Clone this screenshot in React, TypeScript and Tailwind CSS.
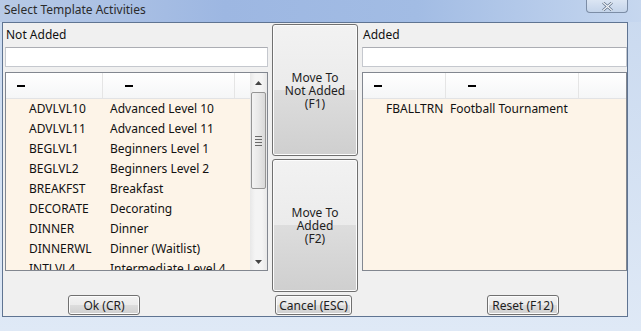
const notAdded = [
  ["ADVLVL10", "Advanced Level 10"],
  ["ADVLVL11", "Advanced Level 11"],
  ["BEGLVL1", "Beginners Level 1"],
  ["BEGLVL2", "Beginners Level 2"],
  ["BREAKFST", "Breakfast"],
  ["DECORATE", "Decorating"],
  ["DINNER", "Dinner"],
  ["DINNERWL", "Dinner (Waitlist)"],
  ["INTLVL4", "Intermediate Level 4"],
];

const added = [["FBALLTRN", "Football Tournament"]];

const btn =
  "border border-[#707070] rounded-[3px] bg-[linear-gradient(#f2f2f2_0%,#ebebeb_50%,#dddddd_50%,#cfcfcf_100%)] shadow-[inset_0_0_0_1px_#fcfcfc] text-[12px] text-[#1e1e1e] flex items-center justify-center text-center leading-[13px]";

const Dash = () => <div className="w-[8px] h-[2px] bg-black" />;

const ListView = ({
  rows,
  codeW,
  descW,
  descPad,
  scroll,
}: {
  rows: string[][];
  codeW: number;
  descW: number;
  descPad: number;
  scroll?: boolean;
}) => (
  <div className="h-[199px] border border-[#828790] bg-[#fdf4e8] flex overflow-hidden">
    <div className="flex-1 flex flex-col min-w-0">
      <div className="h-[26px] shrink-0 flex bg-[linear-gradient(#ffffff,#f5f6f7)] border-b border-[#e2e3e5]">
        <div
          className="h-full flex items-center pl-[11px] border-r border-[#e5e5e5]"
          style={{ width: codeW }}
        >
          <Dash />
        </div>
        <div
          className="h-full flex items-center pl-[22px] border-r border-[#e5e5e5]"
          style={{ width: descW }}
        >
          <Dash />
        </div>
        <div className="flex-1" />
      </div>
      {rows.map(([code, desc]) => (
        <div key={code} className="h-[20px] shrink-0 flex items-center text-[12px] text-[#111]">
          <div className="pl-[23px] whitespace-nowrap" style={{ width: codeW }}>
            {code}
          </div>
          <div className="whitespace-nowrap" style={{ paddingLeft: descPad }}>
            {desc}
          </div>
        </div>
      ))}
    </div>
    {scroll && (
      <div className="w-[17px] shrink-0 bg-[linear-gradient(90deg,#e8e8e8,#f4f4f4_30%,#f4f4f4_70%,#e8e8e8)] flex flex-col items-center">
        <div className="h-[19px] w-full flex items-center justify-center">
          <svg width="7" height="4" viewBox="0 0 7 4">
            <path d="M0 4 L3.5 0 L7 4 Z" fill="#444" />
          </svg>
        </div>
        <div className="w-[15px] h-[97px] rounded-[2px] border border-[#959595] bg-[linear-gradient(90deg,#f3f3f3,#e8e8e8_50%,#d9d9d9)] flex flex-col items-center justify-center gap-[2px]">
          <div className="w-[7px] h-[1px] bg-[#6a6a6a]" />
          <div className="w-[7px] h-[1px] bg-[#6a6a6a]" />
          <div className="w-[7px] h-[1px] bg-[#6a6a6a]" />
          <div className="w-[7px] h-[1px] bg-[#6a6a6a]" />
        </div>
        <div className="flex-1" />
        <div className="h-[17px] w-full flex items-center justify-center">
          <svg width="7" height="4" viewBox="0 0 7 4">
            <path d="M0 0 L7 0 L3.5 4 Z" fill="#444" />
          </svg>
        </div>
      </div>
    )}
  </div>
);

export default function App() {
  return (
    <div className="w-[641px] h-[331px] overflow-hidden bg-[linear-gradient(180deg,#c9d9ef,#dfe9f6)] font-['Noto_Sans','Open_Sans',sans-serif] text-[12px] flex flex-col">
      {/* title bar */}
      <div className="h-[22px] shrink-0 flex items-start bg-[linear-gradient(90deg,#b8cae6,#9db7e2_35%,#a2bce4_65%,#c6d7ef)]">
        <div className="pl-[4px] pt-[1px] text-[12px] text-[#2b2b2b] leading-[17px]">
          Select Template Activities
        </div>
        <div className="flex-1" />
        <div className="mr-[13px] w-[42px] h-[13px] border border-t-0 border-[#7c8da6] rounded-b-[4px] bg-[linear-gradient(#dbe5f3,#c4d4ea)] flex items-center justify-center">
          <svg width="11" height="9" viewBox="0 0 11 9">
            <path d="M1 0.5 L10 8.5 M10 0.5 L1 8.5" stroke="#5a6b82" strokeWidth="2.6" />
            <path d="M1 0.5 L10 8.5 M10 0.5 L1 8.5" stroke="#f4f7fb" strokeWidth="1.2" />
          </svg>
        </div>
      </div>

      {/* client area */}
      <div className="ml-[2px] w-[626px] h-[295px] border border-[#5f7492] bg-[#f0f0f0] flex pl-[2px]">
        {/* left */}
        <div className="w-[263px] flex flex-col">
          <div className="h-[24px] flex items-center pl-[1px] text-[#111]">Not Added</div>
          <div className="h-[20px] border border-[#c5c8ce] border-t-[#abadb3] bg-white" />
          <div className="mt-[5px]">
            <ListView rows={notAdded} codeW={97} descW={132} descPad={7} scroll />
          </div>
          <div className={`${btn} mt-[24px] ml-[63px] w-[72px] h-[20px]`}>Ok (CR)</div>
        </div>

        {/* middle */}
        <div className="w-[86px] ml-[4px] flex flex-col">
          <div className={`${btn} mt-[1px] h-[132px]`}>
            <p>
              Move To
              <br />
              Not Added
              <br />
              (F1)
            </p>
          </div>
          <div className={`${btn} mt-[3px] h-[133px]`}>
            <p>
              Move To
              <br />
              Added
              <br />
              (F2)
            </p>
          </div>
          <div className={`${btn} mt-[3px] ml-[3px] w-[77px] h-[20px]`}>Cancel (ESC)</div>
        </div>

        {/* right */}
        <div className="w-[265px] ml-[4px] flex flex-col">
          <div className="h-[24px] flex items-center pl-[1px] text-[#111]">Added</div>
          <div className="h-[20px] border border-[#c5c8ce] border-t-[#abadb3] bg-white" />
          <div className="mt-[5px]">
            <ListView rows={added} codeW={83} descW={133} descPad={4} />
          </div>
          <div className={`${btn} mt-[24px] ml-[125px] w-[72px] h-[20px]`}>Reset (F12)</div>
        </div>
      </div>
    </div>
  );
}
